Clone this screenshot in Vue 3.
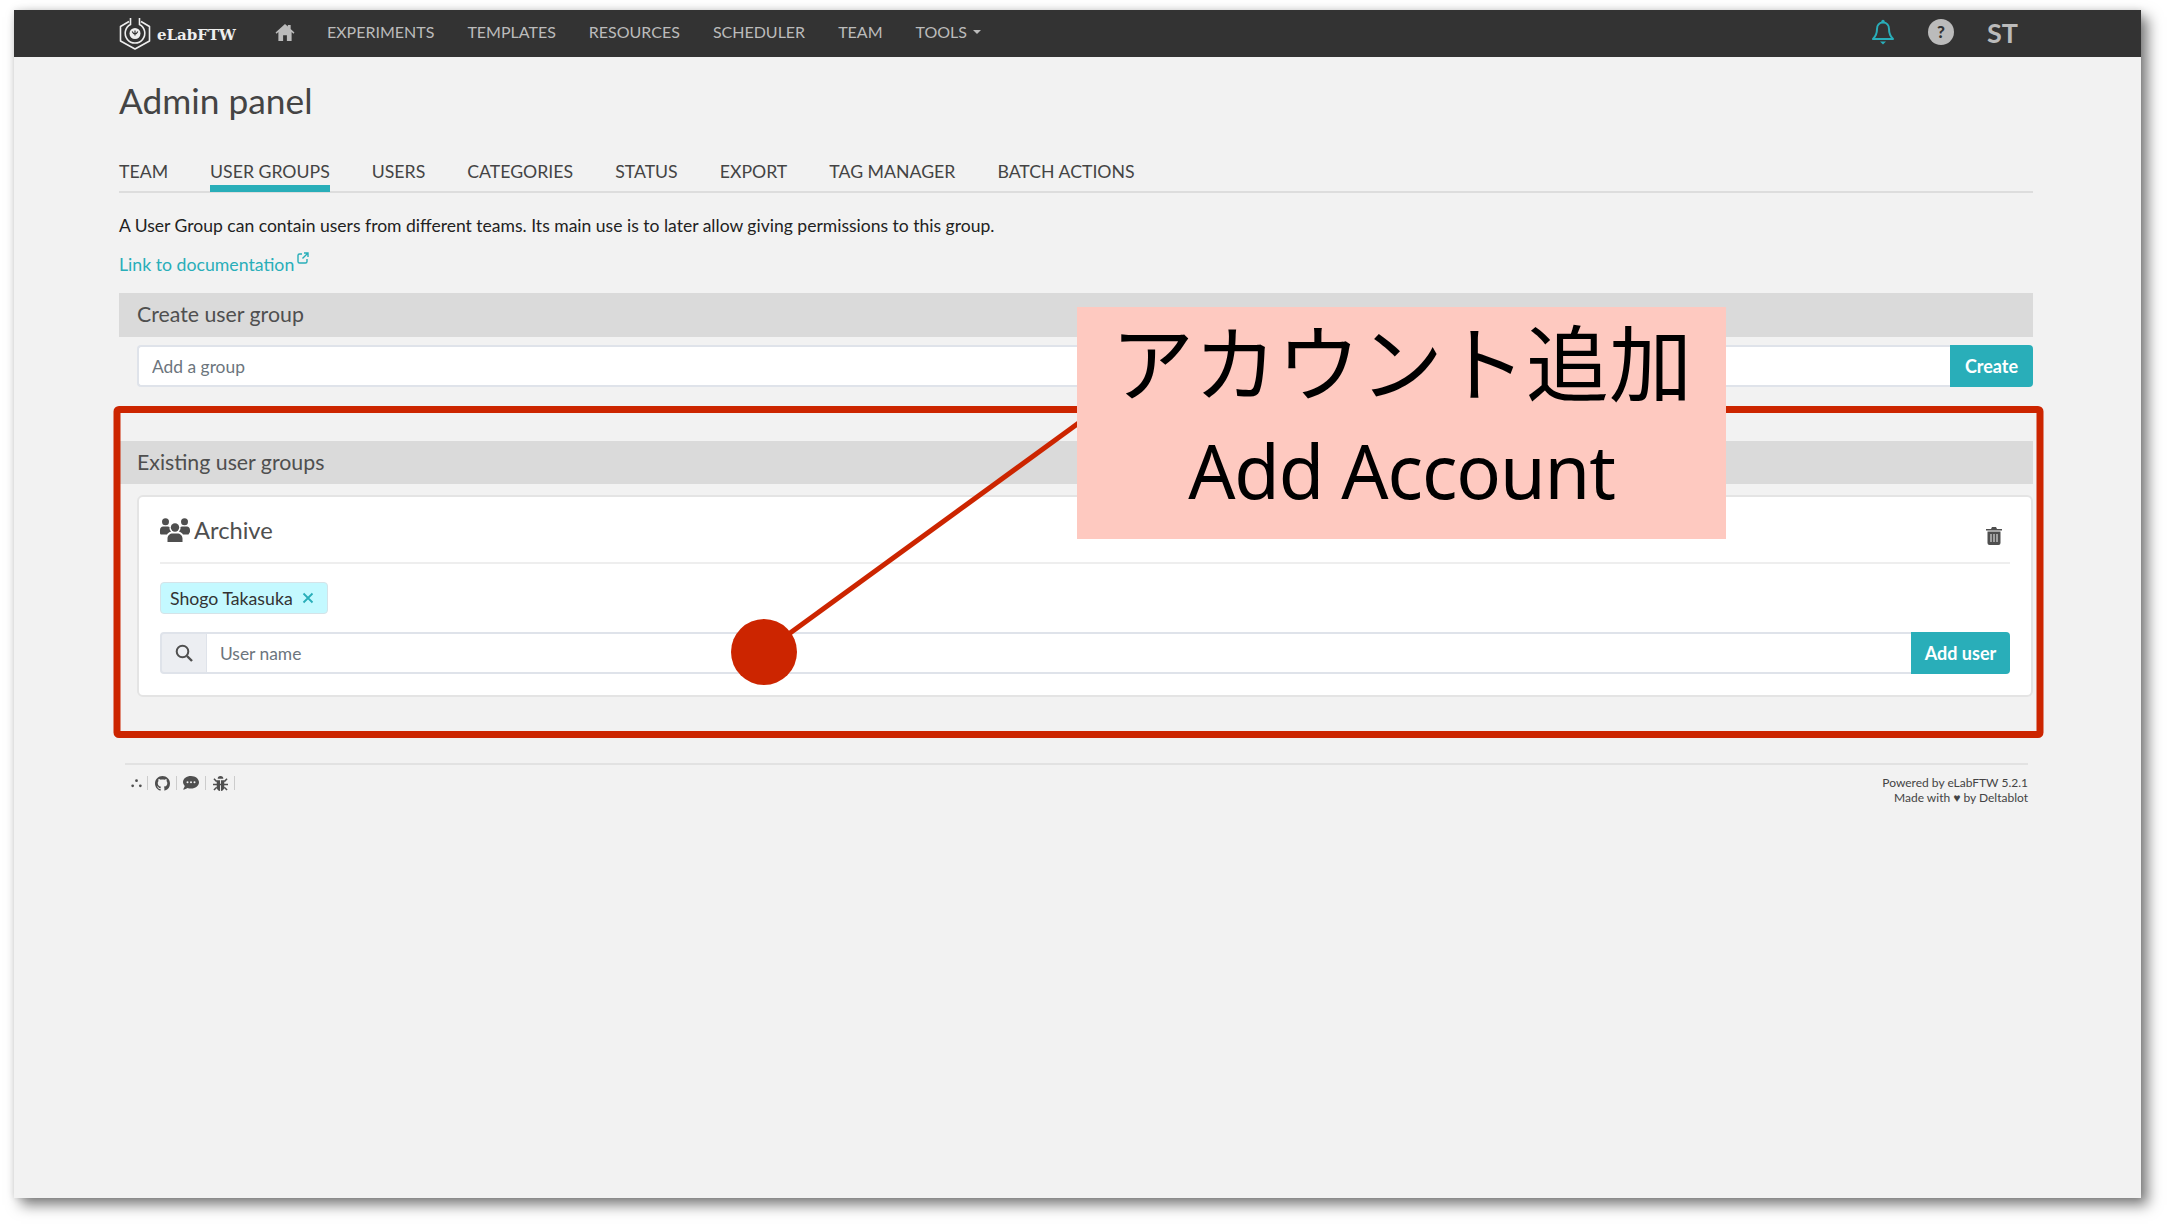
<script setup>
const navItems = ['EXPERIMENTS', 'TEMPLATES', 'RESOURCES', 'SCHEDULER', 'TEAM']
const tabs = ['TEAM', 'USER GROUPS', 'USERS', 'CATEGORIES', 'STATUS', 'EXPORT', 'TAG MANAGER', 'BATCH ACTIONS']
</script>

<template>
  <div class="page">
    <div class="window">
      <header class="nav">
        <div class="brand">
          <svg class="logo" viewBox="0 0 32 33">
            <path d="M10 4.500 1.500 9.500v14.500L16 32l14.500-8V9.500L22 4.500" fill="none" stroke="#eee" stroke-width="1.600" stroke-linejoin="round" />
            <path d="M11.500 1v6.500a9.800 9.800 0 1 0 9 0V1" fill="none" stroke="#eee" stroke-width="1.600" />
            <circle cx="16" cy="16.500" r="5.500" fill="#eee" />
            <path d="M13.200 14.500q2.800 5.500 5.600 0M16 13.500v5" fill="none" stroke="#333" stroke-width="1.200" />
          </svg>
          <span class="brand-name">eLabFTW</span>
        </div>
        <svg class="home" viewBox="0 0 20 18"><path fill="#bbb" d="M10 0 0 9l1 1.200L3 8.500V18h5v-6h4v6h5V8.500l2 1.700L20 9l-4-3.600V1h-3v1.700z" /></svg>
        <nav class="nav-links">
          <span v-for="item in navItems" :key="item">{{ item }}</span>
          <span class="tools">TOOLS<i class="caret"></i></span>
        </nav>
        <div class="nav-right">
          <svg class="bell" viewBox="0 0 22 26">
            <path d="M11 3.500c-3.800 0-6 3-6 6.500 0 6-2 8-4 10h20c-2-2-4-4-4-10 0-3.500-2.200-6.500-6-6.500z" fill="none" stroke="#29aeb9" stroke-width="2" stroke-linejoin="round" />
            <circle cx="11" cy="2.500" r="1.700" fill="#29aeb9" />
            <path d="M8 22.500h6l-3 3z" fill="#29aeb9" />
          </svg>
          <span class="help">?</span>
          <span class="initials">ST</span>
        </div>
      </header>

      <main class="content">
        <h1>Admin panel</h1>
        <div class="tabs">
          <span v-for="t in tabs" :key="t" class="tab" :class="{ active: t === 'USER GROUPS' }">{{ t }}</span>
        </div>
        <p class="intro">A User Group can contain users from different teams. Its main use is to later allow giving permissions to this group.</p>
        <a class="doc-link">Link to documentation<svg class="ext" viewBox="0 0 12 12"><path d="M5 2H2.500A1.500 1.500 0 0 0 1 3.500v6A1.500 1.500 0 0 0 2.500 11h6A1.500 1.500 0 0 0 10 9.500V7M7 1h4v4M11 1 5.500 6.500" fill="none" stroke="#29aeb9" stroke-width="1.400" /></svg></a>

        <h3 class="section">Create user group</h3>
        <div class="create-row">
          <input class="text-input" placeholder="Add a group" />
          <button class="btn">Create</button>
        </div>

        <h3 class="section existing">Existing user groups</h3>
        <section class="card">
          <div class="card-head">
            <svg class="users" viewBox="0 0 30 24">
              <circle cx="15" cy="9.500" r="4.200" fill="#4f4f4f" /><circle cx="5.500" cy="3.800" r="3.500" fill="#4f4f4f" /><circle cx="24.500" cy="3.800" r="3.500" fill="#4f4f4f" />
              <path d="M7.500 24v-3.500c0-3 2.500-5 5-5h5c2.500 0 5 2 5 5V24zM0 15v-3c0-2 1.500-3.500 3-3.500h5c.6 0 1 .2 1.500.5-.3 2 .6 3.500 1.700 4.500-2 .6-3.400 1.500-4.200 3H1.500C.7 16.500 0 16 0 15zM30 15v-3c0-2-1.500-3.500-3-3.500h-5c-.6 0-1 .2-1.500.5.3 2-.6 3.500-1.700 4.500 2 .6 3.400 1.500 4.200 3h5.500c.8-1.500 1.500-2 1.500-3z" fill="#4f4f4f" />
            </svg>
            <span class="group-name">Archive</span>
            <svg class="trash" viewBox="0 0 16 19">
              <path d="M0 3h16v1.500H0zM5 3l1-2h4l1 2z" fill="#4f4f4f" />
              <path d="M1.500 5.500h13V17a2 2 0 0 1-2 2h-9a2 2 0 0 1-2-2z" fill="#4f4f4f" />
              <path d="M5 8v8M8 8v8M11 8v8" stroke="#ccc" stroke-width="1.300" />
            </svg>
          </div>
          <div class="badge">Shogo Takasuka<svg class="cross" viewBox="0 0 12 12"><path d="M1.500 1.500l9 9M10.500 1.500l-9 9" stroke="#29aeb9" stroke-width="1.800" /></svg></div>
          <div class="search-group">
            <span class="addon">
              <svg viewBox="0 0 18 18" width="18" height="18"><circle cx="7.500" cy="7.500" r="5.800" fill="none" stroke="#4f4f4f" stroke-width="2" /><path d="M12 12l5 5" stroke="#4f4f4f" stroke-width="2.400" /></svg>
            </span>
            <input class="text-input user-input" placeholder="User name" />
            <button class="btn add">Add user</button>
          </div>
        </section>

        <footer class="footer">
          <div class="foot-icons">
            <span class="foot-icon">
              <svg viewBox="0 0 12 10" width="11" height="10"><circle cx="6" cy="2.500" r="1.500" fill="#4f4f4f" /><circle cx="1.800" cy="8" r="1.500" fill="#4f4f4f" /><circle cx="10.200" cy="8" r="1.500" fill="#4f4f4f" /></svg>
            </span>
            <span class="foot-icon">
              <svg viewBox="0 0 16 16" width="15" height="15"><path fill="#4f4f4f" d="M8 0C3.580 0 0 3.580 0 8c0 3.540 2.290 6.530 5.470 7.590.4.070.55-.17.55-.38 0-.19-.01-.82-.01-1.490-2.010.37-2.530-.49-2.690-.94-.09-.23-.48-.94-.82-1.130-.28-.15-.68-.52-.01-.53.63-.01 1.080.58 1.230.82.72 1.210 1.870.87 2.330.66.070-.52.28-.87.51-1.070-1.780-.2-3.640-.89-3.640-3.950 0-.87.31-1.590.82-2.150-.08-.2-.36-1.020.08-2.120 0 0 .67-.21 2.200.82.64-.18 1.320-.27 2-.27.68 0 1.360.09 2 .27 1.530-1.040 2.200-.82 2.200-.82.44 1.100.16 1.920.08 2.120.51.56.82 1.270.82 2.150 0 3.070-1.870 3.750-3.650 3.950.29.25.54.73.54 1.480 0 1.070-.01 1.930-.01 2.200 0 .21.15.46.55.38A8.013 8.013 0 0 0 16 8c0-4.420-3.580-8-8-8z" /></svg>
            </span>
            <span class="foot-icon">
              <svg viewBox="0 0 16 14" width="16" height="14"><path fill="#4f4f4f" d="M8 0C3.600 0 0 2.600 0 6c0 1.500.7 2.800 1.800 3.900C1.400 11.200.5 12.500 0 13.500c1.800 0 3.500-.7 4.500-1.500 1.100.4 2.300.6 3.500.6 4.400 0 8-2.900 8-6.300S12.400 0 8 0z" /><circle cx="4.500" cy="6.300" r="1" fill="#f2f2f2" /><circle cx="8" cy="6.300" r="1" fill="#f2f2f2" /><circle cx="11.500" cy="6.300" r="1" fill="#f2f2f2" /></svg>
            </span>
            <span class="foot-icon">
              <svg viewBox="0 0 16 16" width="15" height="15"><path d="M1 3l3 3M15 3l-3 3M0 9h16M1 15l3-3M15 15l-3-3" stroke="#4f4f4f" stroke-width="1.600" /><path d="M5 3a3 3 0 0 1 6 0z" fill="#4f4f4f" /><path d="M4 4.500h3.500V16C5.500 16 4 14 4 12zM12 4.500H8.500V16c2 0 3.500-2 3.500-4z" fill="#4f4f4f" /></svg>
            </span>
          </div>
          <div class="powered">
            <div>Powered by eLabFTW 5.2.1</div>
            <div>Made with ♥ by Deltablot</div>
          </div>
        </footer>
      </main>
    </div>

    <!-- annotations laid over the screenshot -->
    <svg class="marks" viewBox="0 0 2172 1228" width="2172" height="1228">
      <rect x="117" y="409.500" width="1923" height="325" rx="2" fill="none" stroke="#cc2500" stroke-width="7" />
      <path d="M764 652 1080 422" stroke="#cc2500" stroke-width="5" />
      <circle cx="764" cy="652" r="33" fill="#cc2500" />
    </svg>
    <div class="callout">
      <div class="jp">アカウント追加</div>
      <div class="en">Add Account</div>
    </div>
  </div>
</template>

<style>
html, body {
  margin: 0;
  background: #fff;
}
</style>

<style scoped>
.page {
  position: relative;
  width: 2172px;
  height: 1228px;
  padding: 10px 0 0 14px;
  box-sizing: border-box;
  overflow: hidden;
  font-family: Lato, "Liberation Sans", sans-serif;
  color: #333;
}
.window {
  width: 2127px;
  height: 1188px;
  background: #f2f2f2;
  box-shadow: 7px 7px 13px rgba(0, 0, 0, 0.5), 0 0 7px rgba(0, 0, 0, 0.12);
}
.nav {
  height: 47px;
  background: #333;
  display: flex;
  align-items: center;
  padding: 0 123px 0 105px;
}
.brand {
  display: flex;
  align-items: center;
  gap: 6px;
  width: 156px;
}
.logo {
  width: 32px;
  height: 33px;
}
.brand-name {
  color: #eee;
  font-family: "DejaVu Serif", serif;
  font-weight: 700;
  font-size: 15px;
  margin-top: 3px;
}
.home {
  width: 20px;
  height: 17px;
  margin-bottom: 3px;
}
.nav-links {
  display: flex;
  gap: 33px;
  margin-left: 32px;
  color: #bbb;
  font-size: 16px;
  margin-bottom: 4px;
}
.tools {
  display: flex;
  align-items: center;
}
.caret {
  margin-left: 6px;
  border-top: 4px solid #bbb;
  border-left: 4px solid transparent;
  border-right: 4px solid transparent;
}
.nav-right {
  margin-left: auto;
  display: flex;
  align-items: center;
}
.bell {
  width: 22px;
  height: 26px;
  margin-bottom: 3px;
}
.help {
  width: 26px;
  height: 26px;
  margin-left: 34px;
  margin-bottom: 4px;
  border-radius: 50%;
  background: #bbb;
  color: #333;
  font-weight: 900;
  font-size: 17px;
  line-height: 26px;
  text-align: center;
}
.initials {
  margin-left: 33px;
  margin-bottom: 1px;
  color: #bbb;
  font-weight: 700;
  font-size: 27px;
  line-height: 30px;
}
.content {
  padding: 0 108px 0 105px;
}
h1 {
  margin: 22px 0 0;
  font-weight: 400;
  font-size: 35.300px;
  line-height: 44px;
  color: #444;
}
.tabs {
  display: flex;
  gap: 42px;
  margin-top: 38px;
  border-bottom: 2px solid #ddd;
}
.tab {
  font-size: 17.700px;
  line-height: 22px;
  padding-bottom: 9px;
  color: #444;
  margin-bottom: -1px;
}
.tab.active {
  padding-bottom: 2px;
  border-bottom: 7px solid #29aeb9;
}
.intro {
  margin: 21px 0 0;
  font-size: 17.550px;
  line-height: 24px;
  color: #222;
}
.doc-link {
  display: block;
  margin-top: 14px;
  font-size: 17.700px;
  line-height: 24px;
  color: #29aeb9;
}
.ext {
  width: 12px;
  height: 12px;
  margin-left: 3px;
  vertical-align: 7px;
}
.section {
  margin: 16px 0 0;
  height: 44px;
  padding-left: 18px;
  background: #dadada;
  font-weight: 400;
  font-size: 21.300px;
  line-height: 42px;
  color: #4f4f4f;
}
.section.existing {
  margin-top: 54px;
  height: 43px;
}
.create-row {
  display: flex;
  margin: 8px 0 0 18px;
}
.text-input {
  flex: 1;
  height: 42px;
  box-sizing: border-box;
  padding: 0 13px;
  border: 2px solid #dfe3ea;
  border-right: none;
  border-radius: 4px 0 0 4px;
  background: #fff;
  font-family: inherit;
  font-size: 17.400px;
  outline: none;
}
.text-input::placeholder {
  color: #6c757d;
  opacity: 1;
}
.btn {
  height: 42px;
  border: none;
  border-radius: 0 4px 4px 0;
  padding: 0 14px;
  width: 83px;
  background: #29aeb9;
  color: #fff;
  font-family: inherit;
  font-weight: 700;
  font-size: 18px;
}
.card {
  margin: 11px 0 0 18px;
  height: 202px;
  box-sizing: border-box;
  padding: 0 21px;
  background: #fff;
  border: 2px solid #e4e4e4;
  border-radius: 6px;
}
.card-head {
  display: flex;
  align-items: center;
  height: 67px;
  border-bottom: 2px solid #eee;
  box-sizing: border-box;
}
.users {
  width: 30px;
  height: 24px;
  margin-right: 4px;
}
.group-name {
  font-size: 23.700px;
  color: #4f4f4f;
}
.trash {
  width: 16px;
  height: 19px;
  margin-left: auto;
  margin-right: 8px;
  margin-top: 12px;
}
.badge {
  display: flex;
  width: fit-content;
  align-items: center;
  height: 32px;
  box-sizing: border-box;
  margin-top: 18px;
  padding: 0 13px 0 9px;
  background: #c4f9ff;
  border: 1px solid #d5e3e8;
  border-radius: 4px;
  font-size: 17.700px;
  color: #333;
}
.cross {
  width: 12px;
  height: 12px;
  margin-left: 9px;
}
.search-group {
  display: flex;
  margin-top: 18px;
}
.addon {
  width: 47px;
  height: 42px;
  box-sizing: border-box;
  display: flex;
  align-items: center;
  justify-content: center;
  background: #eceef2;
  border: 2px solid #dfe3ea;
  border-right: 1px solid #dfe3ea;
  border-radius: 4px 0 0 4px;
}
.user-input {
  border-left: none;
  border-radius: 0;
}
.btn.add {
  width: 99px;
  padding: 0;
}
.footer {
  margin: 66px 5px 0 6px;
  border-top: 2px solid #e2e2e2;
  display: flex;
  justify-content: space-between;
  padding-top: 11px;
}
.foot-icons {
  display: flex;
  align-items: center;
  height: 16px;
  margin-top: -1px;
}
.foot-icon {
  display: flex;
  justify-content: center;
  align-items: center;
  box-sizing: border-box;
  width: 29px;
  height: 14px;
  border-right: 1px solid #ccc;
}
.foot-icon:first-child {
  width: 23px;
}
.powered {
  text-align: right;
  font-size: 12px;
  line-height: 14.500px;
  color: #444;
}
.marks {
  position: absolute;
  left: 0;
  top: 0;
  pointer-events: none;
}
.callout {
  position: absolute;
  left: 1077px;
  top: 307px;
  width: 649px;
  height: 232px;
  background: #fec9c0;
  color: #000;
  text-align: center;
}
.jp {
  font-family: "Noto Sans CJK JP", sans-serif;
  font-size: 83px;
  line-height: 100px;
  margin-top: 2px;
}
.en {
  font-family: "Noto Sans", "Open Sans", sans-serif;
  font-size: 74px;
  letter-spacing: -1.100px;
  line-height: 100px;
  margin-top: 12px;
}
</style>
